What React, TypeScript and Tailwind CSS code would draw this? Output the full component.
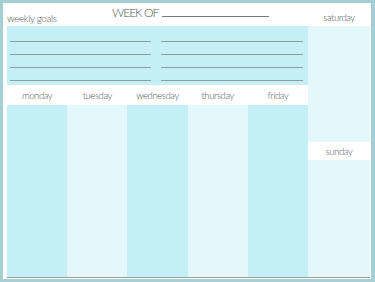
import React from 'react'

const days = ['monday', 'tuesday', 'wednesday', 'thursday', 'friday']

const font = { fontFamily: 'Lato, "Open Sans", sans-serif' }

function GoalLines({ className }: { className: string }) {
  return (
    <div className={`flex flex-col pt-[15px] gap-[12px] ${className}`}>
      {[0, 1, 2, 3].map((i) => (
        <div key={i} className="h-px bg-[#8f9d9f]" />
      ))}
    </div>
  )
}

export default function App() {
  return (
    <div
      className="w-[375px] h-[282px] bg-[#a6ced5] pt-[3px] pl-[3px] pr-[4px] pb-[3px]"
      style={font}
    >
      <div className="h-full bg-white pl-[4px] pr-[1px] pb-px flex flex-col text-[#4f5759] font-light">
        <div className="flex flex-1 min-h-0">
          {/* main planner area */}
          <div className="w-[301px] flex flex-col">
            <div className="h-[23px] flex items-center">
              <span className="text-[10px] leading-none tracking-[-0.4px] pt-[6px] w-[105px]">weekly goals</span>
              <span className="text-[12px] leading-none tracking-[-1px] uppercase pb-[4px]">Week of</span>
              <div className="ml-[4px] w-[107px] h-px bg-[#7a7a7a] mt-[4px]" />
            </div>

            <div className="h-[59px] bg-[#c4eff5] flex px-[3px] gap-[10px]">
              <GoalLines className="w-[141px]" />
              <GoalLines className="w-[142px]" />
            </div>

            <div className="h-[20px] grid grid-cols-5">
              {days.map((d) => (
                <div key={d} className="flex items-center justify-center text-[9.5px] leading-none tracking-[-0.4px] pt-px">
                  {d}
                </div>
              ))}
            </div>

            <div className="flex-1 grid grid-cols-5">
              {days.map((d, i) => (
                <div key={d} className={i % 2 === 0 ? 'bg-[#c4eff5]' : 'bg-[#e4f8fb]'} />
              ))}
            </div>
          </div>

          {/* weekend column */}
          <div className="w-[62px] flex flex-col">
            <div className="h-[23px] flex items-center justify-center text-[9.5px] leading-none tracking-[-0.4px] pt-[6px]">
              saturday
            </div>
            <div className="h-[116px] bg-[#e4f8fb]" />
            <div className="h-[18px] flex items-center justify-center text-[9.5px] leading-none tracking-[-0.4px] pt-px">
              sunday
            </div>
            <div className="flex-1 bg-[#e4f8fb]" />
          </div>
        </div>
        <div className="h-px bg-[#9c9c9c]" />
      </div>
    </div>
  )
}
